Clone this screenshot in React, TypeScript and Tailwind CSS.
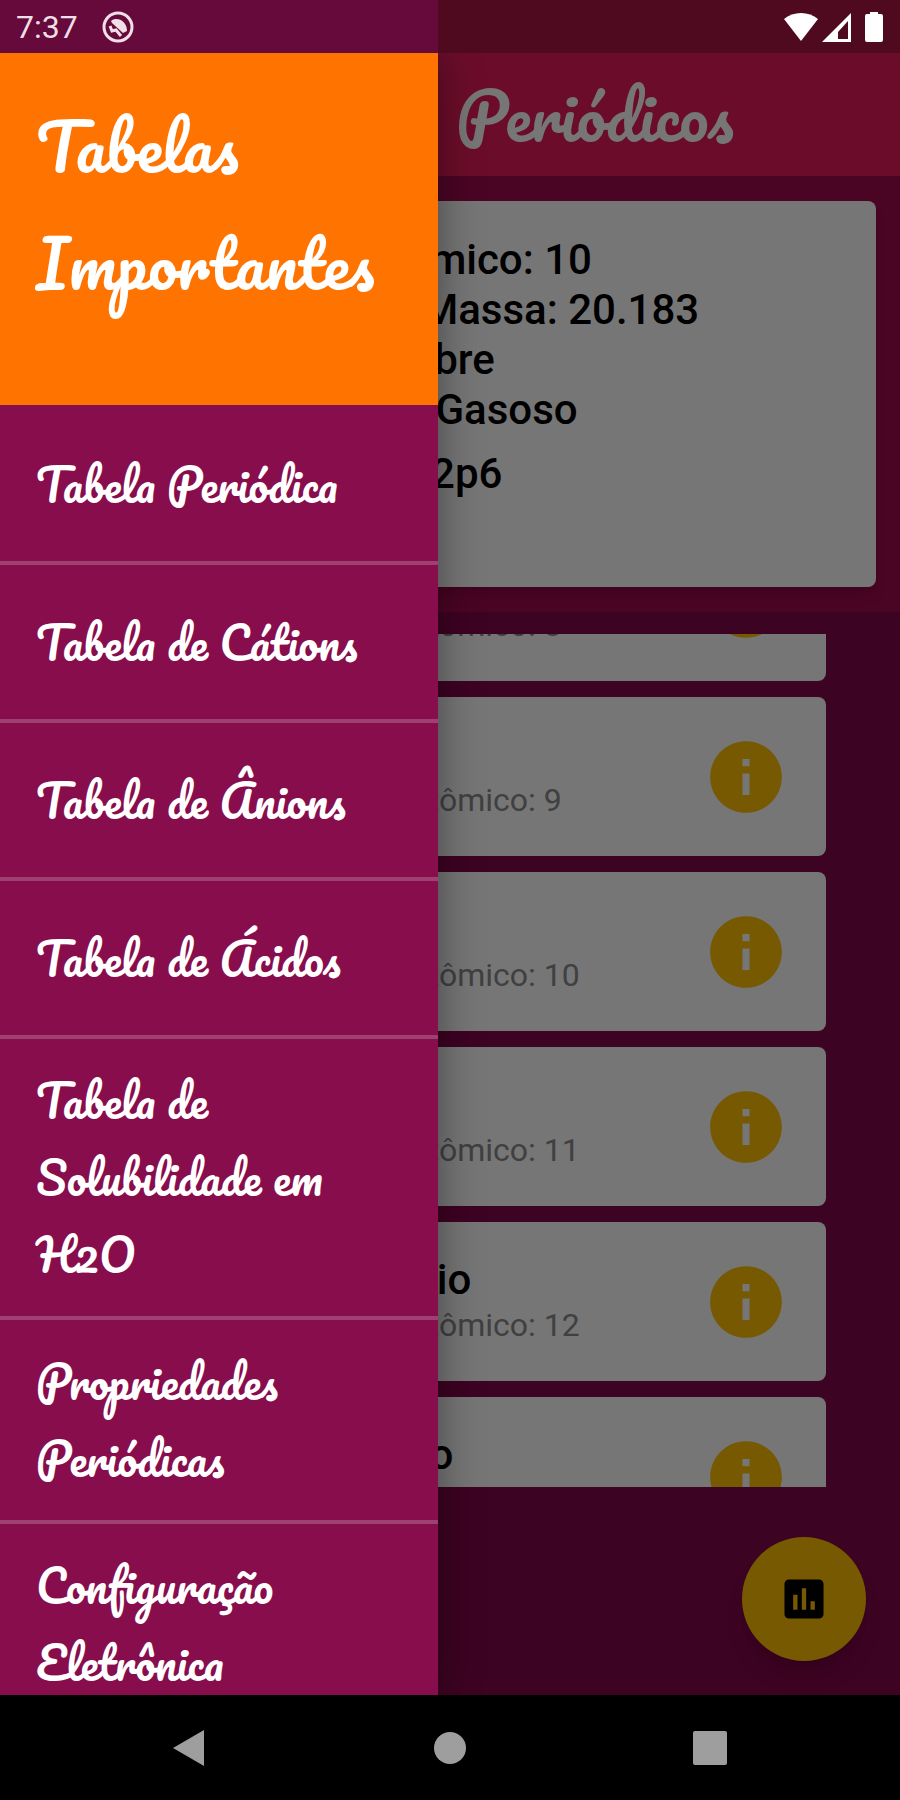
import { MdAssessment, MdInfo } from "react-icons/md";

type Element = { name: string; number: number };

const drawerItems = [
  "Tabela Periódica",
  "Tabela de Cátions",
  "Tabela de Ânions",
  "Tabela de Ácidos",
  "Tabela de Solubilidade em H2O",
  "Propriedades Periódicas",
  "Configuração Eletrônica",
];

const elements: Element[] = [
  { name: "Oxigênio", number: 8 },
  { name: "Flúor", number: 9 },
  { name: "Neônio", number: 10 },
  { name: "Sódio", number: 11 },
  { name: "Magnésio", number: 12 },
  { name: "Alumínio", number: 13 },
];

function StatusBar() {
  return (
    <div className="flex h-[53px] shrink-0 items-center bg-[#4f0a20] text-white">
      <div className="flex h-full w-[438px] items-center gap-6 bg-[#650a3a] pl-4 text-[32px] text-[#f0dfe7]">
        <span>7:37</span>
        <svg viewBox="0 0 32 32" className="h-8 w-8" fill="none" stroke="currentColor" strokeWidth="3">
          <circle cx="16" cy="16" r="14" />
          <path d="M9 10C15 5 25 10 25 20L21 22L10 12Z" fill="currentColor" stroke="none" />
          <path d="M8 15L10 20L14 19L19 25" />
        </svg>
      </div>
      <div className="ml-auto flex items-center gap-1 pr-4">
        <svg viewBox="0 0 34 32" className="h-8 w-[34px]" fill="currentColor">
          <path d="M0 8C9 0 25 0 34 8L17 30Z" />
        </svg>
        <svg viewBox="0 0 30 32" className="h-8 w-[30px]" fill="currentColor" fillRule="evenodd">
          <path d="M29 2V31H0ZM26 10L16 21V28H26Z" />
        </svg>
        <svg viewBox="0 0 20 32" className="ml-2 h-8 w-5" fill="currentColor">
          <path d="M6 1h8v2h3a2 2 0 0 1 2 2v24a2 2 0 0 1-2 2H3a2 2 0 0 1-2-2V5a2 2 0 0 1 2-2h3z" />
        </svg>
      </div>
    </div>
  );
}

function ElementCard({ element }: { element: Element }) {
  return (
    <li className="flex h-[159px] shrink-0 items-center justify-between rounded-lg bg-[#767676] pr-[37px] pl-[262px]">
      <div className="pb-1">
        <h3 className="text-[42px] leading-[50px] font-medium text-black">{element.name}</h3>
        <p className="text-[32px] leading-[40px] text-[#404040]">Número Atômico: {element.number}</p>
      </div>
      <button type="button" aria-label={`Informações sobre ${element.name}`} className="text-[#765900]">
        <MdInfo className="h-[86px] w-[86px]" />
      </button>
    </li>
  );
}

function Drawer() {
  return (
    <nav className="absolute inset-y-0 left-0 z-10 w-[438px] overflow-hidden bg-[#870d4d] font-['Pacifico','Lato',cursive] text-white shadow-[0_0_40px_rgba(0,0,0,0.4)]">
      <h2 className="h-[352px] bg-[#ff7300] px-9 pt-[34px] text-[65px] leading-[117px]">Tabelas Importantes</h2>
      <ul className="pt-0.5">
        {drawerItems.map((item) => (
          <li key={item} className="border-b-4 border-[#9f4073]">
            <a href="#" className="flex min-h-[154px] items-center py-[23px] pr-12 pl-9 text-[44px] leading-[77px]">
              {item}
            </a>
          </li>
        ))}
      </ul>
    </nav>
  );
}

export default function App() {
  return (
    <div className="flex h-screen flex-col overflow-hidden bg-[#3d0322] font-['Roboto',sans-serif]">
      <StatusBar />
      <div className="relative flex min-h-0 flex-1 flex-col overflow-hidden">
        <header className="flex h-[123px] shrink-0 items-center bg-[#6b0d2a] pl-[456px] shadow-md">
          <h1 className="font-['Pacifico','Lato',cursive] text-[65px] leading-[117px] text-[#767676]">Periódicos</h1>
        </header>
        <section className="bg-[#4a0524] px-6 py-[25px]">
          <div className="h-[386px] rounded-lg bg-[#767676] pt-[34px] pl-[180px] text-[42px] leading-[50px] font-medium text-black shadow-lg">
            <p>Número Atômico: 10</p>
            <p>Número de Massa: 20.183</p>
            <p>É um gás nobre</p>
            <p>Seu estado: Gasoso</p>
            <p className="mt-3.5">1s2 + 2s2 + 2p6</p>
          </div>
        </section>
        <div className="mt-[22px] mr-[74px] mb-[208px] min-h-0 flex-1 overflow-hidden pl-6">
          <ul className="-mt-28 flex flex-col gap-4">
            {elements.map((element) => (
              <ElementCard key={element.number} element={element} />
            ))}
          </ul>
        </div>
        <button
          type="button"
          aria-label="Tabelas"
          className="absolute right-[34px] bottom-[34px] flex h-[124px] w-[124px] items-center justify-center rounded-full bg-[#765900] text-black shadow-xl"
        >
          <MdAssessment className="h-[52px] w-[52px]" />
        </button>
        <Drawer />
      </div>
      <footer className="flex h-[105px] shrink-0 items-center bg-black px-[60px] text-[#9e9e9e]">
        <button type="button" aria-label="Voltar" className="flex flex-1 justify-center">
          <svg viewBox="0 0 34 36" className="h-9 w-[34px]" fill="currentColor">
            <path d="M0 18L31 0V36Z" />
          </svg>
        </button>
        <button type="button" aria-label="Início" className="flex flex-1 justify-center">
          <span className="h-8 w-8 rounded-full bg-current" />
        </button>
        <button type="button" aria-label="Recentes" className="flex flex-1 justify-center">
          <span className="h-[34px] w-[34px] rounded-xs bg-current" />
        </button>
      </footer>
    </div>
  );
}
